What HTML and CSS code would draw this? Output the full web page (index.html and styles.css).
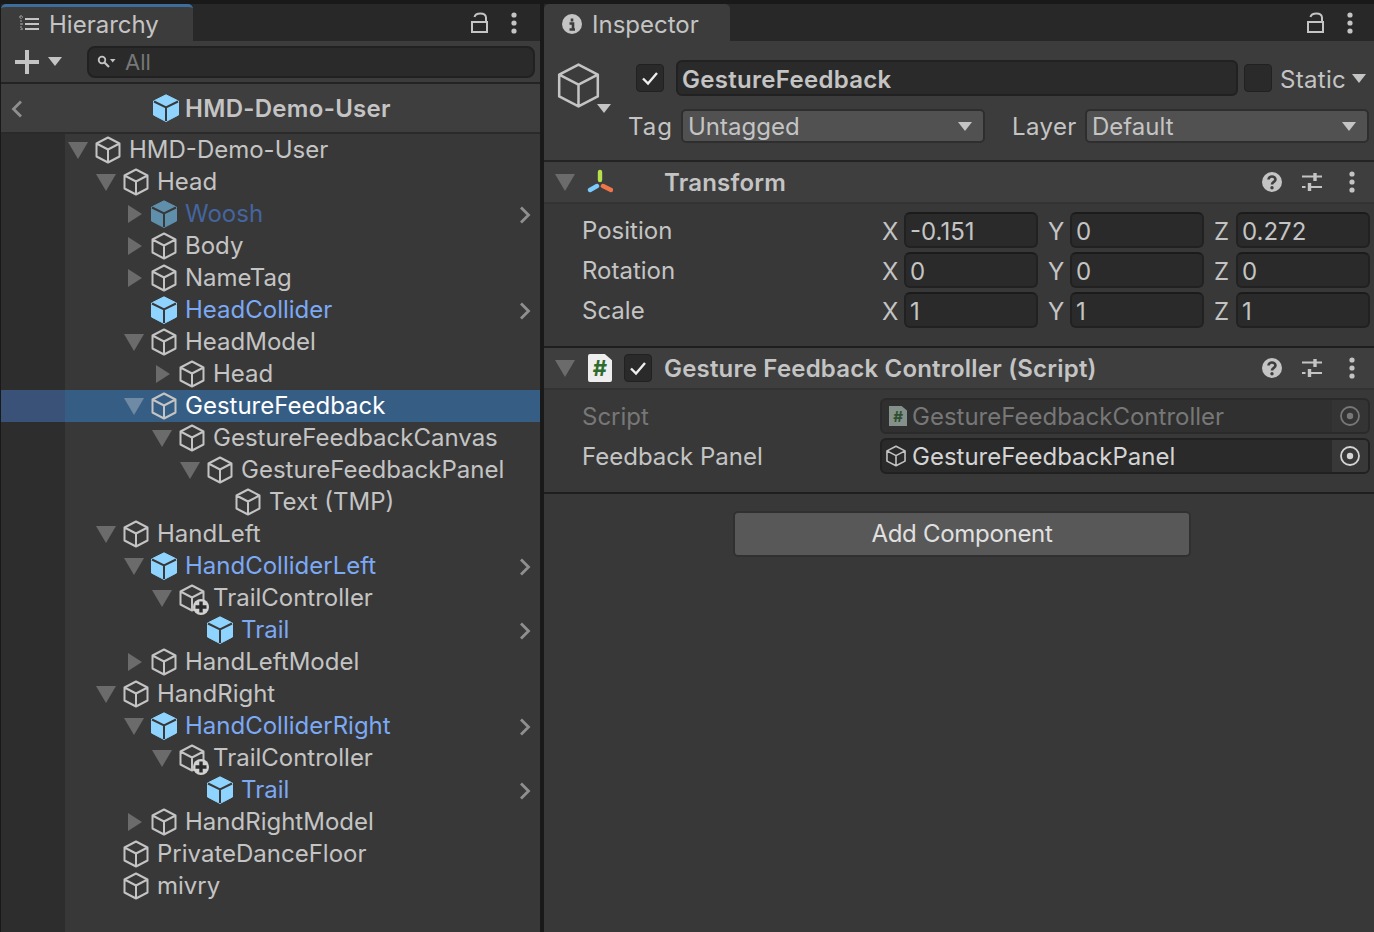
FILE: index.html
```html
<!DOCTYPE html>
<html lang="en">

<head>
  <meta charset="UTF-8">
  <title>Hierarchy and Inspector</title>
  <link rel="stylesheet" href="styles.css">
</head>

<body>
  <svg class="defs" width="0" height="0">
    <symbol id="cube" viewBox="0 0 28 28">
      <path d="M14 1.500 25.500 7.500V20.500L14 26.500 2.500 20.500V7.500ZM2.500 7.500 14 13.500 25.500 7.500M14 13.500V26.500" fill="none" stroke="currentColor" stroke-width="2" stroke-linejoin="round" />
    </symbol>
    <symbol id="prefab" viewBox="0 0 28 28">
      <path d="M14 .8 26.500 7V21L14 27.500 1.500 21V7Z" fill="currentColor" stroke="currentColor" stroke-linejoin="round" />
      <path d="M2 7.500 14 13.500 26 7.500M14 13.500V27" fill="none" stroke="#383838" stroke-width="2" />
    </symbol>
    <symbol id="added" viewBox="0 0 34 34">
      <path d="M14 1.500 25.500 7.500V20.500L14 26.500 2.500 20.500V7.500ZM2.500 7.500 14 13.500 25.500 7.500M14 13.500V26.500" fill="none" stroke="#c4c4c4" stroke-width="2" stroke-linejoin="round" />
      <circle cx="23" cy="23" r="8" fill="#d2d2d2" />
      <path d="M23 17.500V28.500M17.500 23H28.500" stroke="#2a2a2a" stroke-width="3.400" />
    </symbol>
    <symbol id="dots" viewBox="0 0 8 24">
      <circle cx="4" cy="4" r="2.600" fill="currentColor" />
      <circle cx="4" cy="12" r="2.600" fill="currentColor" />
      <circle cx="4" cy="20" r="2.600" fill="currentColor" />
    </symbol>
    <symbol id="lock" viewBox="0 0 18 24">
      <path d="M1 11H16V21H1ZM3.500 6C4.500 1.500 14.500 1 15 6.500V11" fill="none" stroke="currentColor" stroke-width="2" />
    </symbol>
    <symbol id="help" viewBox="0 0 20 20">
      <circle cx="10" cy="10" r="10" fill="currentColor" />
      <path d="M6.500 7.500C6.500 3.500 13.500 3.500 13.500 7.500 13.500 10 10 9.800 10 12.500" fill="none" stroke="#3e3e3e" stroke-width="2.600" />
      <circle cx="10" cy="15.800" r="1.700" fill="#3e3e3e" />
    </symbol>
    <symbol id="sliders" viewBox="0 0 20 20">
      <path d="M0 4.500H20M0 15H3.500M6 15H20" stroke="currentColor" stroke-width="2" />
      <path d="M13 1V9M7.500 11V19" stroke="currentColor" stroke-width="3.400" />
    </symbol>
    <symbol id="check" viewBox="0 0 20 20">
      <path d="M3 10.500 8 15.500 17 5" fill="none" stroke="#eee" stroke-width="2.400" />
    </symbol>
    <symbol id="target" viewBox="0 0 20 20">
      <circle cx="10" cy="10" r="9" fill="none" stroke="currentColor" stroke-width="1.800" />
      <circle cx="10" cy="10" r="3.200" fill="currentColor" />
    </symbol>
    <symbol id="chev" viewBox="0 0 12 18">
      <path d="M2 1.500 9.500 9 2 16.500" fill="none" stroke="#8f8f8f" stroke-width="2.800" />
    </symbol>
  </svg>

  <div class="app">
    <!-- hierarchy -->
    <section class="panel hierarchy">
      <div class="tabbar">
        <div class="tab tab-active">
          <svg class="tab-icon" width="24" height="20" viewBox="0 0 24 20">
            <path d="M8 5H22M8 10H22M8 15H22" stroke="#c4c4c4" stroke-width="2" />
            <path d="M2 3H6M4 1V5M4 6V16M4 10H6M4 15H6" stroke="#8a8a8a" stroke-width="1.400" stroke-dasharray="2 1" />
          </svg>
          <span>Hierarchy</span>
        </div>
        <div class="tab-tools">
          <svg class="tool lock" width="18" height="24"><use href="#lock" /></svg>
          <svg class="tool dots" width="8" height="24"><use href="#dots" /></svg>
        </div>
      </div>
      <div class="toolbar">
        <svg class="plus" width="24" height="24" viewBox="0 0 24 24">
          <path d="M12 0V24M0 12H24" stroke="#c4c4c4" stroke-width="4" />
        </svg>
        <i class="caret caret-hier"></i>
        <div class="search">
          <svg width="20" height="14" viewBox="0 0 20 14">
            <circle cx="5" cy="5" r="3.300" fill="none" stroke="#c4c4c4" stroke-width="1.800" />
            <path d="M7.500 7.500 12 12" stroke="#c4c4c4" stroke-width="2.200" />
            <path d="M13 4H18.500L15.700 7.500Z" fill="#c4c4c4" />
          </svg>
          <span>All</span>
        </div>
      </div>
      <div class="crumb">
        <svg class="back" width="12" height="18" viewBox="0 0 12 18">
          <path d="M10 1.500 2.500 9 10 16.500" fill="none" stroke="#8f8f8f" stroke-width="2.800" />
        </svg>
        <svg class="prefab-ic" width="28" height="28"><use href="#prefab" /></svg>
        <strong>HMD-Demo-User</strong>
      </div>
      <div class="tree">
        <div class="row d0"><i class="arrow open"></i><svg class="ic" width="28" height="28"><use href="#cube" /></svg><span>HMD-Demo-User</span></div>
        <div class="row d1"><i class="arrow open"></i><svg class="ic" width="28" height="28"><use href="#cube" /></svg><span>Head</span></div>
        <div class="row d2 off"><i class="arrow closed"></i><svg class="ic" width="28" height="28"><use href="#prefab" /></svg><span>Woosh</span><svg class="go" width="12" height="18"><use href="#chev" /></svg></div>
        <div class="row d2"><i class="arrow closed"></i><svg class="ic" width="28" height="28"><use href="#cube" /></svg><span>Body</span></div>
        <div class="row d2"><i class="arrow closed"></i><svg class="ic" width="28" height="28"><use href="#cube" /></svg><span>NameTag</span></div>
        <div class="row d2 pre"><i class="arrow"></i><svg class="ic" width="28" height="28"><use href="#prefab" /></svg><span>HeadCollider</span><svg class="go" width="12" height="18"><use href="#chev" /></svg></div>
        <div class="row d2"><i class="arrow open"></i><svg class="ic" width="28" height="28"><use href="#cube" /></svg><span>HeadModel</span></div>
        <div class="row d3"><i class="arrow closed"></i><svg class="ic" width="28" height="28"><use href="#cube" /></svg><span>Head</span></div>
        <div class="row d2 sel"><i class="arrow open"></i><svg class="ic" width="28" height="28"><use href="#cube" /></svg><span>GestureFeedback</span></div>
        <div class="row d3"><i class="arrow open"></i><svg class="ic" width="28" height="28"><use href="#cube" /></svg><span>GestureFeedbackCanvas</span></div>
        <div class="row d4"><i class="arrow open"></i><svg class="ic" width="28" height="28"><use href="#cube" /></svg><span>GestureFeedbackPanel</span></div>
        <div class="row d5"><i class="arrow"></i><svg class="ic" width="28" height="28"><use href="#cube" /></svg><span>Text (TMP)</span></div>
        <div class="row d1"><i class="arrow open"></i><svg class="ic" width="28" height="28"><use href="#cube" /></svg><span>HandLeft</span></div>
        <div class="row d2 pre"><i class="arrow open"></i><svg class="ic" width="28" height="28"><use href="#prefab" /></svg><span>HandColliderLeft</span><svg class="go" width="12" height="18"><use href="#chev" /></svg></div>
        <div class="row d3"><i class="arrow open"></i><svg class="ic" width="28" height="28" viewBox="0 0 28 28" overflow="visible"><use href="#added" width="34" height="34" /></svg><span>TrailController</span></div>
        <div class="row d4 pre"><i class="arrow"></i><svg class="ic" width="28" height="28"><use href="#prefab" /></svg><span>Trail</span><svg class="go" width="12" height="18"><use href="#chev" /></svg></div>
        <div class="row d2"><i class="arrow closed"></i><svg class="ic" width="28" height="28"><use href="#cube" /></svg><span>HandLeftModel</span></div>
        <div class="row d1"><i class="arrow open"></i><svg class="ic" width="28" height="28"><use href="#cube" /></svg><span>HandRight</span></div>
        <div class="row d2 pre"><i class="arrow open"></i><svg class="ic" width="28" height="28"><use href="#prefab" /></svg><span>HandColliderRight</span><svg class="go" width="12" height="18"><use href="#chev" /></svg></div>
        <div class="row d3"><i class="arrow open"></i><svg class="ic" width="28" height="28" viewBox="0 0 28 28" overflow="visible"><use href="#added" width="34" height="34" /></svg><span>TrailController</span></div>
        <div class="row d4 pre"><i class="arrow"></i><svg class="ic" width="28" height="28"><use href="#prefab" /></svg><span>Trail</span><svg class="go" width="12" height="18"><use href="#chev" /></svg></div>
        <div class="row d2"><i class="arrow closed"></i><svg class="ic" width="28" height="28"><use href="#cube" /></svg><span>HandRightModel</span></div>
        <div class="row d1"><i class="arrow"></i><svg class="ic" width="28" height="28"><use href="#cube" /></svg><span>PrivateDanceFloor</span></div>
        <div class="row d1"><i class="arrow"></i><svg class="ic" width="28" height="28"><use href="#cube" /></svg><span>mivry</span></div>
      </div>
    </section>

    <!-- inspector -->
    <section class="panel inspector">
      <div class="tabbar">
        <div class="tab tab-insp">
          <svg width="20" height="20" viewBox="0 0 20 20">
            <circle cx="10" cy="10" r="10" fill="#c4c4c4" />
            <path d="M10 4.500V7.500M7.500 9.500H11V15M7.500 15.500H13" fill="none" stroke="#3c3c3c" stroke-width="2.600" />
          </svg>
          <span>Inspector</span>
        </div>
        <div class="tab-tools tools-insp">
          <svg class="tool lock" width="18" height="24"><use href="#lock" /></svg>
          <svg class="tool dots" width="8" height="24"><use href="#dots" /></svg>
        </div>
      </div>

      <div class="go-head">
        <div class="go-icon">
          <svg class="big-cube" width="47" height="47" viewBox="0 0 28 28"><path d="M14 1.500 25.500 7.500V20.500L14 26.500 2.500 20.500V7.500ZM2.500 7.500 14 13.500 25.500 7.500M14 13.500V26.500" fill="none" stroke="#c4c4c4" stroke-width="1.500" stroke-linejoin="round" /></svg>
          <i class="caret caret-go"></i>
        </div>
        <div class="go-rows">
          <div class="go-row">
            <span class="box box-on"><svg width="20" height="20"><use href="#check" /></svg></span>
            <div class="name-field">GestureFeedback</div>
            <span class="box"></span>
            <span class="static">Static</span>
            <i class="caret"></i>
          </div>
          <div class="go-row tag-row">
            <span class="lbl-tag">Tag</span>
            <div class="drop drop-tag"><span>Untagged</span><i class="caret"></i></div>
            <span class="lbl-layer">Layer</span>
            <div class="drop drop-layer"><span>Default</span><i class="caret"></i></div>
          </div>
        </div>
      </div>

      <div class="comp-head">
        <i class="arrow open"></i>
        <svg class="axis" width="26" height="26" viewBox="0 0 26 26">
          <path d="M13 3V11" stroke="#b6e04c" stroke-width="4.400" stroke-linecap="round" />
          <path d="M10 17 3 21" stroke="#7ccbff" stroke-width="4.400" stroke-linecap="round" />
          <path d="M16 17 24 21" stroke="#f0764a" stroke-width="4.400" stroke-linecap="round" />
        </svg>
        <strong class="title-transform">Transform</strong>
        <div class="comp-tools">
          <svg width="20" height="20"><use href="#help" /></svg>
          <svg width="20" height="20"><use href="#sliders" /></svg>
          <svg width="8" height="24"><use href="#dots" /></svg>
        </div>
      </div>
      <div class="comp-body transform-body">
        <div class="prop">
          <span class="prop-name">Position</span>
          <div class="vec"><span>X</span><div class="num">-0.151</div><span>Y</span><div class="num">0</div><span>Z</span><div class="num">0.272</div></div>
        </div>
        <div class="prop">
          <span class="prop-name">Rotation</span>
          <div class="vec"><span>X</span><div class="num">0</div><span>Y</span><div class="num">0</div><span>Z</span><div class="num">0</div></div>
        </div>
        <div class="prop">
          <span class="prop-name">Scale</span>
          <div class="vec"><span>X</span><div class="num">1</div><span>Y</span><div class="num">1</div><span>Z</span><div class="num">1</div></div>
        </div>
      </div>

      <div class="comp-head">
        <i class="arrow open"></i>
        <span class="script-ic">#</span>
        <span class="box box-on box-comp"><svg width="20" height="20"><use href="#check" /></svg></span>
        <strong>Gesture Feedback Controller (Script)</strong>
        <div class="comp-tools">
          <svg width="20" height="20"><use href="#help" /></svg>
          <svg width="20" height="20"><use href="#sliders" /></svg>
          <svg width="8" height="24"><use href="#dots" /></svg>
        </div>
      </div>
      <div class="comp-body script-body">
        <div class="prop dim">
          <span class="prop-name">Script</span>
          <div class="obj">
            <span class="obj-script">#</span><span class="obj-name">GestureFeedbackController</span>
            <span class="obj-pick"><svg width="20" height="20"><use href="#target" /></svg></span>
          </div>
        </div>
        <div class="prop">
          <span class="prop-name">Feedback Panel</span>
          <div class="obj">
            <svg class="obj-cube" width="22" height="22" viewBox="0 0 28 28"><path d="M14 1.500 25.500 7.500V20.500L14 26.500 2.500 20.500V7.500ZM2.500 7.500 14 13.500 25.500 7.500M14 13.500V26.500" fill="none" stroke="#c4c4c4" stroke-width="2" stroke-linejoin="round" /></svg>
            <span class="obj-name">GestureFeedbackPanel</span>
            <span class="obj-pick"><svg width="20" height="20"><use href="#target" /></svg></span>
          </div>
        </div>
      </div>
      <div class="add-wrap">
        <button class="add-btn">Add Component</button>
      </div>
    </section>
  </div>
</body>

</html>
```
FILE: styles.css
```css
* {
  margin: 0;
  padding: 0;
  box-sizing: border-box;
}

html,
body {
  width: 1374px;
  height: 932px;
  overflow: hidden;
  background: #191919;
}

body {
  font-family: Inter, "Noto Sans", sans-serif;
  font-size: 24px;
  color: #c4c4c4;
}

.defs {
  position: absolute;
}

svg {
  display: block;
  flex: none;
}

.app {
  display: flex;
  gap: 4px;
  height: 932px;
  padding: 4px 0 0 1px;
}

.panel {
  display: flex;
  flex-direction: column;
  background: #383838;
}

.hierarchy {
  width: 539px;
}

.inspector {
  width: 830px;
}

/* tabs */
.tabbar {
  display: flex;
  justify-content: space-between;
  height: 37px;
  background: #282828;
  flex: none;
}

.tab {
  display: flex;
  align-items: center;
  height: 37px;
  background: #3c3c3c;
  border-radius: 5px 5px 0 0;
}

.tab-active {
  width: 192px;
  padding-left: 16px;
  gap: 8px;
  border-top: 3px solid #3e6d9c;
}

.tab-insp {
  width: 186px;
  padding: 3px 0 0 18px;
  gap: 10px;
}

.tab-tools {
  display: flex;
  align-items: center;
  gap: 21px;
  padding-right: 22px;
}

.tools-insp {
  padding-right: 20px;
}

/* toolbar */
.toolbar {
  display: flex;
  align-items: center;
  height: 43px;
  padding: 0 5px 0 14px;
  background: #3c3c3c;
  border-bottom: 2px solid #232323;
  flex: none;
}

.caret {
  display: block;
  flex: none;
  width: 0;
  height: 0;
  border-style: solid;
  border-width: 9px 7.500px 0;
  border-color: #c4c4c4 transparent transparent;
}

.caret-hier {
  margin-left: 9px;
}

.search {
  display: flex;
  align-items: center;
  gap: 8px;
  flex: 1;
  height: 32px;
  margin-left: 25px;
  padding-left: 8px;
  background: #2a2a2a;
  border: 2px solid #212121;
  border-radius: 8px;
  font-size: 22px;
  color: #777;
}

/* breadcrumb */
.crumb {
  position: relative;
  display: flex;
  align-items: center;
  height: 50px;
  padding-left: 151px;
  gap: 5px;
  background: #3e3e3e;
  border-bottom: 2px solid #2a2a2a;
  color: #8fd3ff;
  flex: none;
}

.crumb strong {
  color: #c4c4c4;
  font-weight: 600;
  letter-spacing: .3px;
}

.back {
  position: absolute;
  left: 10px;
  top: 16px;
}

/* tree */
.tree {
  flex: 1;
  background: linear-gradient(to right, #2d2d2d 64px, #383838 64px);
}

.row {
  display: flex;
  align-items: center;
  height: 32px;
  white-space: nowrap;
}

.row span {
  padding-bottom: 2px;
}

.d0 { padding-left: 67px; }
.d1 { padding-left: 95px; }
.d2 { padding-left: 123px; }
.d3 { padding-left: 151px; }
.d4 { padding-left: 179px; }
.d5 { padding-left: 207px; }

.arrow {
  display: block;
  flex: none;
  width: 26px;
  height: 16px;
}

.arrow.open {
  width: 0;
  height: 0;
  margin-right: 6px;
  border-style: solid;
  border-width: 17px 10px 0;
  border-color: #6b6b6b transparent transparent;
}

.arrow.closed {
  width: 0;
  height: 0;
  margin-left: 4px;
  margin-right: 8px;
  border-style: solid;
  border-width: 9px 0 9px 14px;
  border-color: transparent transparent transparent #6b6b6b;
}

.ic {
  margin-right: 7px;
  color: #c4c4c4;
}

.pre .ic {
  color: #8fd3ff;
}

.pre span {
  color: #7ca9f4;
}

.off .ic {
  color: #5f8fab;
}

.off span {
  color: #44659f;
}

.go {
  margin: 2px 9px 0 auto;
}

.sel {
  background: linear-gradient(to right, #3b5278 64px, #365e85 64px);
  color: #fff;
}

.sel .arrow.open {
  border-top-color: #6f8aa5;
}

/* game object header */
.go-head {
  display: flex;
  height: 121px;
  padding: 19px 5px 0 14px;
  background: #3c3c3c;
  border-bottom: 2px solid #232323;
  flex: none;
}

.go-icon {
  position: relative;
  width: 71px;
  flex: none;
}

.big-cube {
  margin: 2px 0 0 -3px;
}

.caret-go {
  position: absolute;
  left: 39px;
  top: 44px;
}

.go-rows {
  display: flex;
  flex-direction: column;
  gap: 13px;
  flex: 1;
}

.go-row {
  display: flex;
  align-items: center;
  height: 36px;
}

.box {
  display: flex;
  align-items: center;
  justify-content: center;
  width: 28px;
  height: 28px;
  background: #2a2a2a;
  border: 1px solid #212121;
  border-radius: 4px;
  flex: none;
}

.box-on {
  margin-left: 7px;
}

.name-field {
  display: flex;
  align-items: center;
  width: 562px;
  height: 36px;
  margin: 0 6px 0 12px;
  padding: 2px 0 0 4px;
  background: #2a2a2a;
  border: 2px solid #212121;
  border-radius: 6px;
  font-weight: 600;
  letter-spacing: .3px;
}

.static {
  margin: 0 6px 0 8px;
  padding-top: 2px;
  letter-spacing: .3px;
}

.tag-row {
  height: 34px;
}

.lbl-tag {
  width: 52px;
  margin-left: -1px;
  margin-right: 1px;
  letter-spacing: 1px;
}

.drop {
  display: flex;
  align-items: center;
  justify-content: space-between;
  height: 34px;
  padding: 0 11px 0 5px;
  background: #515151;
  border: 2px solid #2e2e2e;
  border-radius: 5px;
}

.drop-tag {
  width: 304px;
}

.lbl-layer {
  width: 73px;
  margin-left: 27px;
  letter-spacing: .4px;
}

.drop-layer {
  width: 284px;
}

/* component */
.comp-head {
  display: flex;
  align-items: center;
  height: 42px;
  padding: 0 18px 0 11px;
  background: #3e3e3e;
  border-bottom: 2px solid #333;
  flex: none;
}

.comp-head .arrow {
  margin-right: 13px;
}

.comp-head strong {
  font-weight: 600;
  letter-spacing: .2px;
}

.axis {
  margin-right: 51px;
  margin-left: -1px;
}

.script-ic {
  display: flex;
  align-items: center;
  justify-content: center;
  width: 24px;
  height: 28px;
  margin-right: 12px;
  background: #eee;
  border-radius: 2px;
  clip-path: polygon(0 0, 70% 0, 100% 22%, 100% 100%, 0 100%);
  color: #2f6b2f;
  font-weight: 700;
  font-size: 22px;
}

.box-comp {
  margin: 0 12px 0 0;
}

.comp-tools {
  display: flex;
  align-items: center;
  gap: 20px;
  margin-left: auto;
}

.comp-tools svg:last-child {
  margin-left: 6px;
}

.comp-body {
  padding-left: 38px;
  padding-right: 4px;
  flex: none;
}

.transform-body {
  height: 144px;
  padding-top: 6px;
  border-bottom: 2px solid #1e1e1e;
}

.script-body {
  height: 104px;
  padding-top: 6px;
  border-bottom: 2px solid #1e1e1e;
}

.prop {
  display: flex;
  align-items: center;
  height: 40px;
}

.prop-name {
  width: 300px;
  flex: none;
}

.vec {
  display: grid;
  grid-template-columns: 22px 134px 32px 134px 32px 134px;
  align-items: center;
}

.vec span {
  padding-top: 2px;
}

.vec span:nth-child(n+2) {
  padding-left: 10px;
}

.num {
  display: flex;
  align-items: center;
  height: 36px;
  padding: 2px 0 0 4px;
  background: #2a2a2a;
  border: 2px solid #212121;
  border-top-color: #1b1b1b;
  border-radius: 6px;
}

.obj {
  display: flex;
  align-items: center;
  width: 490px;
  height: 36px;
  margin-left: -2px;
  padding-left: 3px;
  background: #2a2a2a;
  border: 2px solid #212121;
  border-radius: 6px;
  color: #d4d4d4;
}

.obj-name {
  margin-left: 5px;
}

.obj-script {
  display: flex;
  align-items: center;
  justify-content: center;
  width: 18px;
  height: 20px;
  background: #84908a;
  clip-path: polygon(0 0, 70% 0, 100% 22%, 100% 100%, 0 100%);
  color: #2f4f2f;
  font-size: 15px;
  font-weight: 700;
}

.obj-pick {
  display: flex;
  align-items: center;
  justify-content: center;
  width: 36px;
  height: 32px;
  margin-left: auto;
  background: #383838;
  border-radius: 0 4px 4px 0;
}

.dim {
  color: #777;
}

.dim .obj {
  padding-left: 7px;
  background: #303030;
  border-color: #2a2a2a;
  color: #777;
}

.dim .obj-pick {
  background: #343434;
}

.add-wrap {
  display: flex;
  justify-content: center;
  padding: 17px 0 0 6px;
}

.add-btn {
  width: 458px;
  height: 46px;
  padding-bottom: 2px;
  background: #585858;
  border: 2px solid #303030;
  border-radius: 5px;
  font: inherit;
  letter-spacing: -.3px;
  color: #e0e0e0;
}
```
